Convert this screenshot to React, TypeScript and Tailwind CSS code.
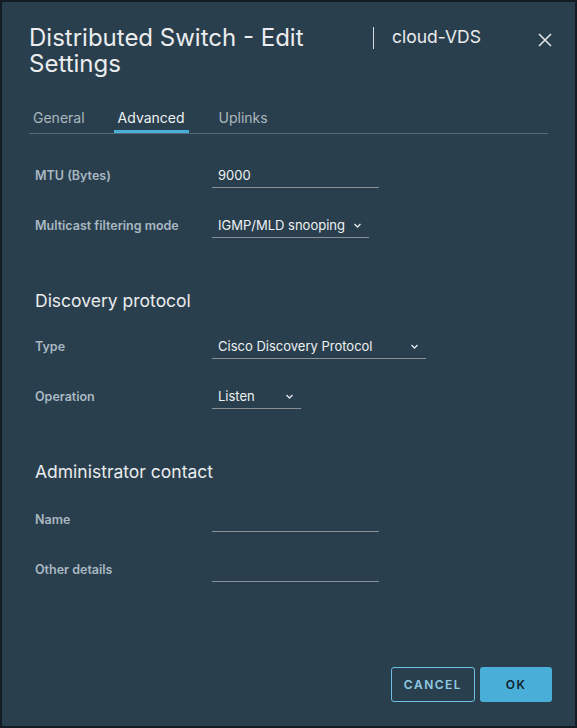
import React from 'react';

const font = { fontFamily: 'Inter, "Open Sans", "Liberation Sans", sans-serif' };

function Chevron() {
  return (
    <svg width="9" height="9" viewBox="0 0 9 9" className="shrink-0">
      <path d="M1.5 3 L4.5 6 L7.5 3" fill="none" stroke="#e5e9ec" strokeWidth="1.3" />
    </svg>
  );
}

function Row({ label, children }: { label: string; children?: React.ReactNode }) {
  return (
    <div className="flex items-end h-[50px] pb-[13px]">
      <div className="w-[177px] text-[12.5px] leading-[16px] font-semibold text-[#a9b8c2] pb-[4px]">{label}</div>
      {children}
    </div>
  );
}

function Field({ width, value }: { width: string; value?: string }) {
  return (
    <div className={`${width} h-[25px] border-b border-[#8a9196] flex items-end pb-[4px] px-[6px] text-[13px] leading-[16px] text-[#eef1f3]`}>
      {value}
    </div>
  );
}

function Select({ width, value }: { width: string; value: string }) {
  return (
    <div className={`${width} h-[25px] border-b border-[#8a9196] flex items-end justify-between pb-[4px] pl-[6px] pr-[7px] text-[13px] leading-[16px] text-[#eef1f3]`}>
      <span>{value}</span>
      <span className="pb-[3px]"><Chevron /></span>
    </div>
  );
}

export default function App() {
  return (
    <div style={font} className="w-[577px] h-[728px] bg-[#121c22] p-[2px]">
      <div className="w-full h-full bg-[#2a3f4d] flex flex-col px-[27px] pt-[23px] pb-[24px]">
        <div className="flex items-start">
          <h1 className="w-[331px] text-[24px] leading-[26px] text-[#eaeced] font-normal">
            Distributed Switch - Edit Settings
          </h1>
          <div className="ml-[13px] mt-[2px] h-[22px] w-px bg-[#d7dadc]" />
          <div className="ml-[18px] text-[17.5px] leading-[24px] text-[#eaeced] flex-1">cloud-VDS</div>
          <svg width="14" height="14" viewBox="0 0 14 14" className="mt-[8px] mr-[-4px]">
            <path d="M1 1 L13 13 M13 1 L1 13" stroke="#e5e9ec" strokeWidth="1.5" />
          </svg>
        </div>

        <div className="mt-[32px] flex border-b border-[#566b79] text-[14px] leading-[18px]">
          <div className="px-[4px] pb-[6px] text-[#aab7bf]">General</div>
          <div className="ml-[25px] px-[4px] pb-[3px] text-[#eef1f3] border-b-[3px] border-[#49afd9]">Advanced</div>
          <div className="ml-[26px] px-[4px] pb-[6px] text-[#aab7bf]">Uplinks</div>
        </div>

        <div className="pl-[6px] mt-[17px]">
          <Row label="MTU (Bytes)">
            <Field width="w-[167px]" value="9000" />
          </Row>
          <Row label="Multicast filtering mode">
            <Select width="w-[157px]" value="IGMP/MLD snooping" />
          </Row>

          <div className="mt-[39px] mb-[10px] text-[17.5px] leading-[22px] text-[#eaeced]">Discovery protocol</div>
          <Row label="Type">
            <Select width="w-[214px]" value="Cisco Discovery Protocol" />
          </Row>
          <Row label="Operation">
            <Select width="w-[89px]" value="Listen" />
          </Row>

          <div className="mt-[39px] mb-[12px] text-[17.5px] leading-[22px] text-[#eaeced]">Administrator contact</div>
          <Row label="Name">
            <Field width="w-[167px]" />
          </Row>
          <Row label="Other details">
            <Field width="w-[167px]" />
          </Row>
        </div>

        <div className="mt-auto flex justify-end gap-[5px] mr-[-4px]">
          <button className="w-[84px] h-[35px] rounded-[3px] border border-[#6cbfe0] text-[#8fcbe3] text-[12px] font-semibold tracking-[1.5px]">
            CANCEL
          </button>
          <button className="w-[72px] h-[35px] rounded-[3px] bg-[#49afd9] text-[#12222b] text-[12px] font-semibold tracking-[1.5px]">
            OK
          </button>
        </div>
      </div>
    </div>
  );
}
